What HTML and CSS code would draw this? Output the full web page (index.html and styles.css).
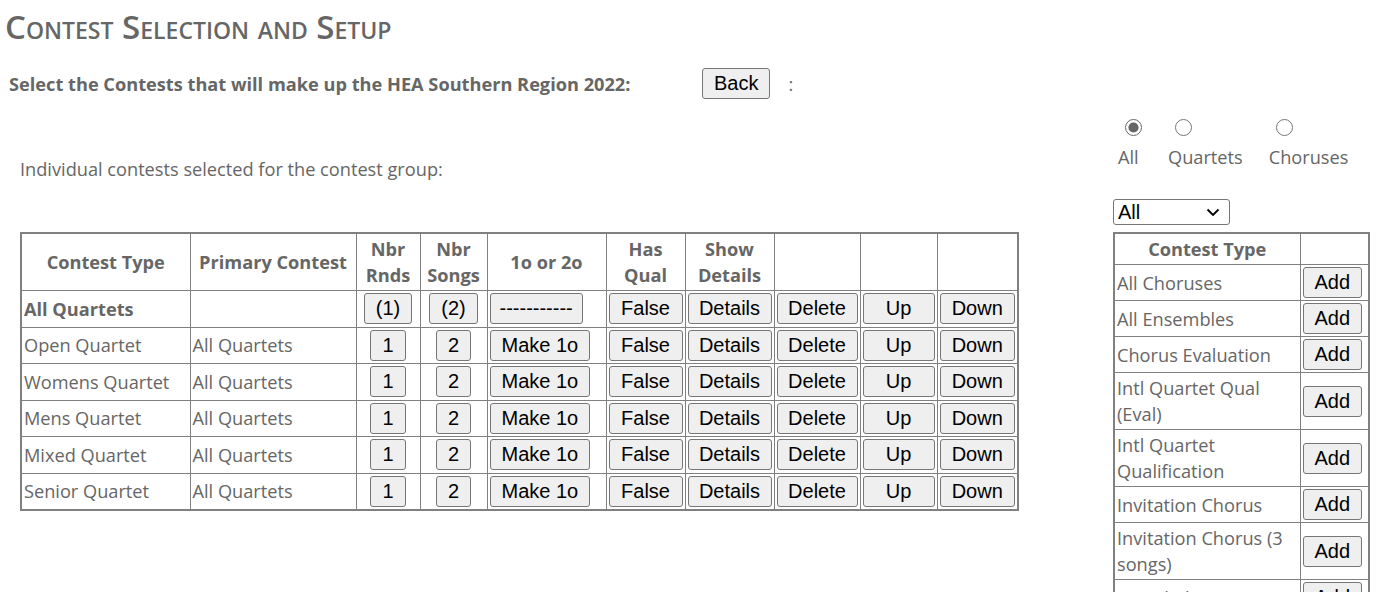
FILE: index.html
```html
<!DOCTYPE html>
<html>
<head>
  <title>Contest Selection and Setup</title>
  <link rel="stylesheet" href="styles.css">
</head>
<body>
  <h1 class="page-title">Contest Selection and Setup</h1>

  <div class="select-row">
    <span class="select-label">Select the Contests that will make up the HEA Southern Region 2022:</span>
    <button type="button" class="btn">Back</button>
    <span class="colon">:</span>
  </div>

  <div class="content">
    <div class="main">
      <p class="intro">Individual contests selected for the contest group:</p>

      <table class="grid selected">
        <colgroup>
          <col class="w-type"><col class="w-primary"><col class="w-rnds"><col class="w-songs"><col class="w-make">
          <col class="w-qual"><col class="w-details"><col class="w-delete"><col class="w-up"><col class="w-down">
        </colgroup>
        <thead>
          <tr>
            <th>Contest Type</th>
            <th>Primary Contest</th>
            <th>Nbr<br/>Rnds</th>
            <th>Nbr<br/>Songs</th>
            <th>1o or 2o</th>
            <th>Has<br/>Qual</th>
            <th>Show<br/>Details</th>
            <th></th>
            <th></th>
            <th></th>
          </tr>
        </thead>
        <tbody>
          <tr>
            <td><strong>All Quartets</strong></td>
            <td></td>
            <td class="center"><button type="button" class="btn">(1)</button></td>
            <td class="center"><button type="button" class="btn">(2)</button></td>
            <td><button type="button" class="btn dashes">-----------</button></td>
            <td><button type="button" class="btn fill">False</button></td>
            <td><button type="button" class="btn fill">Details</button></td>
            <td><button type="button" class="btn fill">Delete</button></td>
            <td><button type="button" class="btn fill">Up</button></td>
            <td><button type="button" class="btn fill">Down</button></td>
          </tr>
          <tr>
            <td>Open Quartet</td>
            <td>All Quartets</td>
            <td class="center"><button type="button" class="btn">1</button></td>
            <td class="center"><button type="button" class="btn">2</button></td>
            <td><button type="button" class="btn">Make 1o</button></td>
            <td><button type="button" class="btn fill">False</button></td>
            <td><button type="button" class="btn fill">Details</button></td>
            <td><button type="button" class="btn fill">Delete</button></td>
            <td><button type="button" class="btn fill">Up</button></td>
            <td><button type="button" class="btn fill">Down</button></td>
          </tr>
          <tr>
            <td>Womens Quartet</td>
            <td>All Quartets</td>
            <td class="center"><button type="button" class="btn">1</button></td>
            <td class="center"><button type="button" class="btn">2</button></td>
            <td><button type="button" class="btn">Make 1o</button></td>
            <td><button type="button" class="btn fill">False</button></td>
            <td><button type="button" class="btn fill">Details</button></td>
            <td><button type="button" class="btn fill">Delete</button></td>
            <td><button type="button" class="btn fill">Up</button></td>
            <td><button type="button" class="btn fill">Down</button></td>
          </tr>
          <tr>
            <td>Mens Quartet</td>
            <td>All Quartets</td>
            <td class="center"><button type="button" class="btn">1</button></td>
            <td class="center"><button type="button" class="btn">2</button></td>
            <td><button type="button" class="btn">Make 1o</button></td>
            <td><button type="button" class="btn fill">False</button></td>
            <td><button type="button" class="btn fill">Details</button></td>
            <td><button type="button" class="btn fill">Delete</button></td>
            <td><button type="button" class="btn fill">Up</button></td>
            <td><button type="button" class="btn fill">Down</button></td>
          </tr>
          <tr>
            <td>Mixed Quartet</td>
            <td>All Quartets</td>
            <td class="center"><button type="button" class="btn">1</button></td>
            <td class="center"><button type="button" class="btn">2</button></td>
            <td><button type="button" class="btn">Make 1o</button></td>
            <td><button type="button" class="btn fill">False</button></td>
            <td><button type="button" class="btn fill">Details</button></td>
            <td><button type="button" class="btn fill">Delete</button></td>
            <td><button type="button" class="btn fill">Up</button></td>
            <td><button type="button" class="btn fill">Down</button></td>
          </tr>
          <tr>
            <td>Senior Quartet</td>
            <td>All Quartets</td>
            <td class="center"><button type="button" class="btn">1</button></td>
            <td class="center"><button type="button" class="btn">2</button></td>
            <td><button type="button" class="btn">Make 1o</button></td>
            <td><button type="button" class="btn fill">False</button></td>
            <td><button type="button" class="btn fill">Details</button></td>
            <td><button type="button" class="btn fill">Delete</button></td>
            <td><button type="button" class="btn fill">Up</button></td>
            <td><button type="button" class="btn fill">Down</button></td>
          </tr>
        </tbody>
      </table>
    </div>

    <div class="side">
      <div class="filter">
        <label class="filter-item"><input type="radio" name="kind" checked/><span>All</span></label>
        <label class="filter-item"><input type="radio" name="kind"/><span>Quartets</span></label>
        <label class="filter-item"><input type="radio" name="kind"/><span>Choruses</span></label>
      </div>

      <div class="select-wrap">
        <select class="type-select">
          <option>All</option>
          <option>Quartets</option>
          <option>Choruses</option>
        </select>
        <svg class="chevron" width="14" height="9" viewBox="0 0 14 9"><path d="M1.5 1.5 L7 7 L12.5 1.5" fill="none" stroke="#000" stroke-width="1.8"/></svg>
      </div>

      <table class="grid available">
        <colgroup>
          <col class="w-avail"><col class="w-add">
        </colgroup>
        <thead>
          <tr>
            <th>Contest Type</th>
            <th></th>
          </tr>
        </thead>
        <tbody>
          <tr><td>All Choruses</td><td><button type="button" class="btn">Add</button></td></tr>
          <tr><td>All Ensembles</td><td><button type="button" class="btn">Add</button></td></tr>
          <tr><td>Chorus Evaluation</td><td><button type="button" class="btn">Add</button></td></tr>
          <tr><td>Intl Quartet Qual (Eval)</td><td><button type="button" class="btn">Add</button></td></tr>
          <tr><td>Intl Quartet Qualification</td><td><button type="button" class="btn">Add</button></td></tr>
          <tr><td>Invitation Chorus</td><td><button type="button" class="btn">Add</button></td></tr>
          <tr><td>Invitation Chorus (3 songs)</td><td><button type="button" class="btn">Add</button></td></tr>
          <tr><td>Mixed Chorus</td><td><button type="button" class="btn">Add</button></td></tr>
        </tbody>
      </table>
    </div>
  </div>
</body>
</html>
```

FILE: styles.css
```css
body {
  margin: 0;
  font-family: "Open Sans", "Noto Sans", sans-serif;
  font-size: 18.2px;
  color: #666;
  background-color: #fff;
}
.page-title {
  margin: 0;
  padding: 6px 0 0 5px;
  font-size: 33px;
  font-weight: 600;
  font-variant: small-caps;
  line-height: 42px;
  color: #666;
}
.select-row {
  display: flex;
  align-items: center;
  margin-top: 20px;
  padding-left: 9px;
}
.select-label {
  width: 693px;
  font-weight: bold;
}
.colon {
  margin-left: 18px;
}
.btn {
  font-family: "Liberation Sans", Arial, sans-serif;
  font-size: 20px;
  line-height: 23px;
  color: #000;
  background-color: #efefef;
  border: 1px solid #767676;
  border-radius: 3px;
  padding: 3px 11px;
  cursor: pointer;
}
.btn:hover {
  background-color: #e5e5e5;
}
.btn.fill {
  width: 100%;
  padding-left: 0;
  padding-right: 0;
}
.btn.dashes {
  padding-left: 9px;
  padding-right: 9px;
}
.content {
  display: flex;
  align-items: flex-start;
  margin-top: 15px;
}
.main {
  margin-left: 20px;
}
.intro {
  margin: 42px 0 0 0;
  line-height: 26px;
}
.grid {
  border-collapse: collapse;
  table-layout: fixed;
  border: 2px solid #808080;
}
.grid th,
.grid td {
  border: 1px solid #808080;
  padding: 2px;
  line-height: 26px;
  text-align: left;
}
.grid th {
  text-align: center;
  font-weight: bold;
}
.grid td.center {
  text-align: center;
}
.selected {
  width: 997px;
  margin-top: 50px;
}
.selected thead tr {
  height: 54px;
}
.selected tbody tr {
  height: 36.5px;
}
.w-type { width: 169px; }
.w-primary { width: 166px; }
.w-rnds { width: 64px; }
.w-songs { width: 67px; }
.w-make { width: 119px; }
.w-qual { width: 79px; }
.w-details { width: 89px; }
.w-delete { width: 86px; }
.w-up { width: 77px; }
.w-down { width: 81px; }

.side {
  margin-left: auto;
  margin-right: 26px;
  width: 255px;
}
.filter {
  display: flex;
  gap: 26px;
  margin-top: 5px;
  padding-left: 5px;
}
.filter-item {
  display: flex;
  flex-direction: column;
  align-items: flex-start;
}
.filter-item input {
  width: 17px;
  height: 17px;
  margin: 0 0 8px 7px;
  accent-color: #666;
}
.filter-item span {
  line-height: 26px;
}
.select-wrap {
  position: relative;
  width: 117px;
  margin-top: 29px;
}
.type-select {
  display: block;
  appearance: none;
  width: 117px;
  height: 26px;
  padding: 0 0 0 4px;
  font-family: "Liberation Sans", Arial, sans-serif;
  font-size: 20px;
  color: #000;
  background-color: #fff;
  border: 1px solid #767676;
  border-radius: 3px;
}
.chevron {
  position: absolute;
  right: 10px;
  top: 9px;
  pointer-events: none;
}
.available {
  width: 255px;
  margin-top: 7px;
}
.available thead tr {
  height: 28px;
}
.available tbody tr {
  height: 36px;
}
.w-avail { width: 186px; }
.w-add { width: 69px; }
```
